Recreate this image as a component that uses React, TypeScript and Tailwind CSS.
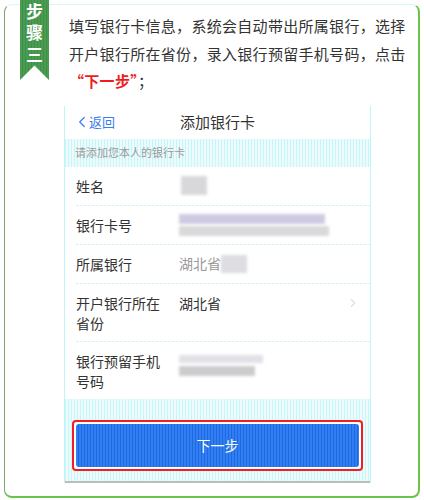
import { ChevronLeft, ChevronRight } from "lucide-react";

const stripes = "bg-[repeating-linear-gradient(90deg,#c4f7fb_0px,#c4f7fb_1px,#effafa_1px,#effafa_3px)]";

function Blur({ w, h, color, ml = 0 }: { w: number; h: number; color: string; ml?: number }) {
    return (
        <div
            className="blur-[1.5px] opacity-70"
            style={{ width: w, height: h, background: color, marginLeft: ml }}
        />
    );
}

function Row({ label, children, tall }: { label: string; children?: React.ReactNode; tall?: boolean }) {
    return (
        <div className={tall ? "flex items-start bg-white pl-[11px] h-[57px] pt-[9px]" : "flex items-center bg-white pl-[11px] h-[38px]"}>
            <div className="w-[90px] mr-[13px] shrink-0 text-[14px] leading-[20px] text-[#333]">{label}</div>
            <div className="flex-1 flex items-center">{children}</div>
        </div>
    );
}

function Line() {
    return <div className="ml-[11px] h-px bg-[repeating-linear-gradient(90deg,#dcf1f1_0px,#dcf1f1_3px,#ffffff_3px,#ffffff_4px)]" />;
}

export default function App() {
    return (
        <div className="w-[424px] h-[500px] bg-white relative overflow-hidden" style={{ fontFamily: '"Noto Sans CJK SC", "Noto Sans", sans-serif' }}>
            {/* badge */}
            <div className="absolute left-[20px] top-0 w-[29px] h-[80px] z-10 bg-[repeating-linear-gradient(90deg,#4a9c52_0px,#4a9c52_2px,#3f8f47_2px,#3f8f47_3px)] [clip-path:polygon(0_0,100%_0,100%_100%,50%_82%,0_100%)] flex justify-center pt-[3px]">
                <span className="[writing-mode:vertical-rl] text-white font-bold text-[17px] leading-[29px] tracking-[4.5px]">步骤三</span>
            </div>

            <div className="ml-[4px] mt-[4px] w-[416px] h-[494px] rounded-[8px] border-l border-l-[#7fa56c] border-r-2 border-r-[#6cc34b] border-b-2 border-b-[#6cc34b] border-t border-t-[#d9f7f9] bg-white">
                <div className="pl-[64px] pt-[7px] text-[15px] tracking-[0.3px] leading-[27.5px] text-[#333]">
                    <div>填写银行卡信息，系统会自动带出所属银行，选择</div>
                    <div>开户银行所在省份，录入银行预留手机号码，点击</div>
                    <div>
                        <span className="text-[#f01c1c] font-bold">“下一步”</span>；
                    </div>
                </div>

                <div className="ml-[59px] mt-[11px] w-[307px] border-x border-x-[#bff4f8]">
                    {/* nav */}
                    <div className="h-[33px] bg-white flex items-center relative">
                        <div className="flex items-center text-[#3a7cf0] text-[13px] pl-[8px]">
                            <ChevronLeft size={18} strokeWidth={1.6} className="-mr-[2px]" />
                            <span>返回</span>
                        </div>
                        <div className="absolute inset-0 flex items-center justify-center text-[15px] text-[#333]">添加银行卡</div>
                    </div>
                    <div className={`h-[28px] ${stripes} flex items-center pl-[10px] text-[11px] text-[#9a9a9a]`}>
                        请添加您本人的银行卡
                    </div>

                    <Row label="姓名">
                        <Blur w={26} h={19} color="#c8c8cc" ml={2} />
                    </Row>
                    <Line />
                    <Row label="银行卡号">
                        <div className="flex flex-col gap-[2px]">
                            <Blur w={146} h={10} color="#b9b5d6" />
                            <Blur w={150} h={10} color="#c9c9cc" />
                        </div>
                    </Row>
                    <Line />
                    <Row label="所属银行">
                        <span className="text-[14px] text-[#999]">湖北省</span>
                        <Blur w={26} h={18} color="#cfcfd6" />
                    </Row>
                    <Line />
                    <Row label="开户银行所在省份" tall>
                        <span className="text-[14px] leading-[20px] text-[#333]">湖北省</span>
                        <ChevronRight size={14} strokeWidth={1.6} className="ml-auto mr-[10px] text-[#c4c4c4]" />
                    </Row>
                    <Line />
                    <Row label="银行预留手机号码" tall>
                        <div className="flex flex-col gap-[3px] mt-[4px]">
                            <Blur w={84} h={8} color="#d4d4dc" />
                            <Blur w={76} h={10} color="#b7b7bb" />
                        </div>
                    </Row>

                    {/* button area */}
                    <div className={`h-[84px] ${stripes} pt-[21px] px-[7px] flex flex-col`}>
                        <div className="h-[51px] border-2 border-[#f21e24] rounded-[4px] p-[2px] bg-white">
                            <div className="h-full rounded-[3px] bg-[repeating-linear-gradient(90deg,#2f7ff2_0px,#2f7ff2_2px,#2168e0_2px,#2168e0_3px)] flex items-center justify-center text-white text-[14px]">
                                下一步
                            </div>
                        </div>
                        <div className="mt-auto -mx-[7px] h-[2px] bg-[#bdbdbd]" />
                    </div>
                </div>
            </div>
        </div>
    );
}
